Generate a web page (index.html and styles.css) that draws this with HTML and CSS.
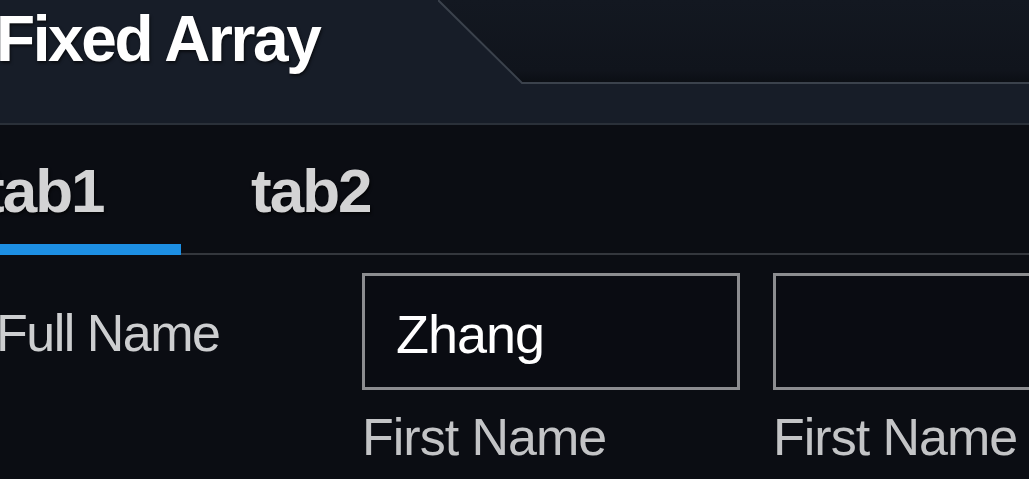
FILE: index.html
```html
<!DOCTYPE html>
<html lang="en">
<head>
  <meta charset="UTF-8">
  <meta name="viewport" content="width=device-width, initial-scale=1.0">
  <title>Fixed Array</title>
  <link rel="stylesheet" href="styles.css">
</head>
<body>
  <header class="page-header">
    <h1>Fixed Array</h1>
    <!-- decorative bevel panel -->
    <svg class="header-panel" width="591" height="86" viewBox="0 0 591 86">
      <defs>
        <linearGradient id="panelShade" x1="0" y1="0" x2="0" y2="1">
          <stop offset="0" stop-color="#131821"/>
          <stop offset="0.85" stop-color="#10141c"/>
          <stop offset="1" stop-color="#0b0e14"/>
        </linearGradient>
      </defs>
      <polygon points="0,0 84,83 591,83 591,0" fill="url(#panelShade)"/>
      <polyline points="0,0 84,83 591,83" fill="none" stroke="#3b424c" stroke-width="2"/>
    </svg>
  </header>

  <nav class="tabs">
    <a class="tab active" href="#"><span class="tab-text first">tab1</span></a>
    <a class="tab" href="#"><span class="tab-text">tab2</span></a>
  </nav>

  <form class="name-form">
    <label class="row-label" for="first1">Full Name</label>
    <input class="name-input" id="first1" type="text" value="Zhang">
    <input class="name-input" id="first2" type="text" value="">
    <span class="field-label">First Name</span>
    <span class="field-label">First Name</span>
  </form>
</body>
</html>
```

FILE: styles.css
```css
body {
  margin: 0;
  background-color: #0b0d13;
  font-family: 'Liberation Sans', Arial, sans-serif;
  color: #c8c9cb;
  overflow: hidden;
  height: 479px;
}

/* Header */
.page-header {
  position: relative;
  height: 125px;
  background-color: #171d28;
  border-bottom: 2px solid #2a3039;
  box-sizing: border-box;
}

.page-header h1 {
  position: relative;
  z-index: 1;
  margin: 0 0 0 -4px;
  padding-top: 7px;
  font-size: 64px;
  line-height: 1;
  font-weight: bold;
  letter-spacing: -2.4px;
  color: #ffffff;
  text-shadow: 1px 2px 3px rgba(0, 0, 0, 0.6);
}

.header-panel {
  position: absolute;
  top: 0;
  right: 0;
}

/* Tabs */
.tabs {
  display: flex;
  height: 130px;
  box-sizing: border-box;
  border-bottom: 2px solid #34373d;
}

.tab {
  display: block;
  box-sizing: border-box;
  height: 128px;
  padding-top: 35px;
  text-decoration: none;
  color: #d3d3d4;
}

.tab.active {
  width: 181px;
  height: 130px;
  margin-bottom: -2px;
  border-bottom: 11px solid #1d8fe4;
}

.tab-text {
  display: block;
  font-size: 62px;
  line-height: 1;
  font-weight: bold;
  letter-spacing: -2px;
  text-shadow: 1px 2px 3px rgba(0, 0, 0, 0.7);
}

.tab-text.first {
  margin-left: -16px;
}

.tab + .tab {
  margin-left: 70px;
}

/* Form */
.name-form {
  display: grid;
  grid-template-columns: 329px 378px 378px;
  column-gap: 33px;
  padding-top: 18px;
}

.row-label {
  align-self: center;
  margin-left: -4px;
  padding-top: 2px;
  font-size: 52px;
  line-height: 1;
  letter-spacing: -1.5px;
  color: #cdced0;
}

.name-input {
  box-sizing: border-box;
  width: 378px;
  height: 117px;
  margin: 0;
  padding: 4px 0 0 31px;
  border: 3px solid #8c8d90;
  background-color: #0a0c12;
  font-family: 'Liberation Sans', Arial, sans-serif;
  font-size: 54px;
  letter-spacing: -1px;
  color: #ffffff;
  outline: none;
}

.field-label {
  margin-top: 21px;
  font-size: 52px;
  line-height: 1;
  letter-spacing: -1px;
  color: #c3c4c6;
}

.field-label:nth-of-type(1) {
  grid-column: 2;
}

.field-label:nth-of-type(2) {
  grid-column: 3;
}
```
